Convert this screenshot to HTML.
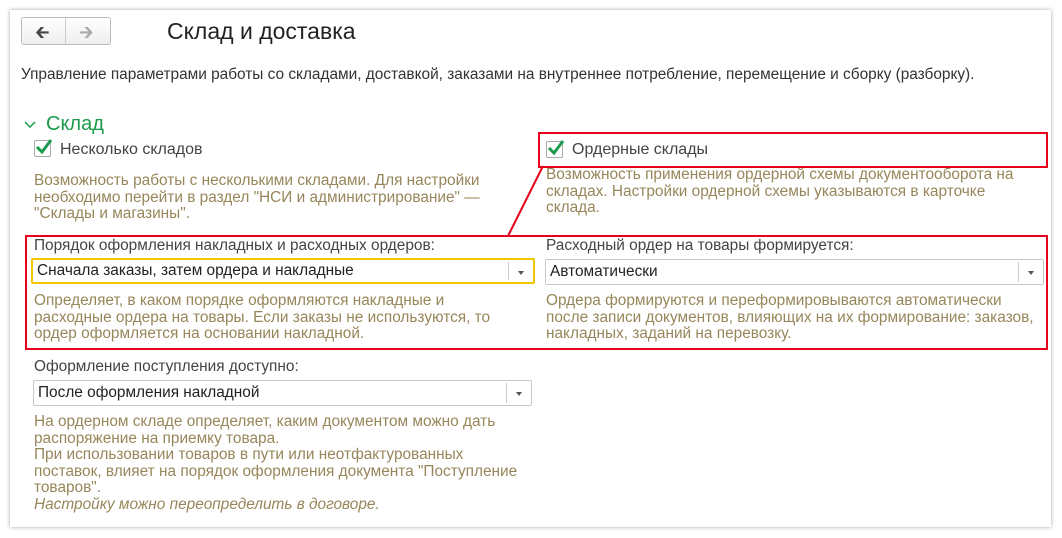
<!DOCTYPE html>
<html><head><meta charset="utf-8"><style>
body{margin:0;width:1062px;height:538px;background:#fff;font-family:"Liberation Sans",sans-serif;position:relative;overflow:hidden;color:#333}
.card{position:absolute;left:10px;top:10px;width:1041px;height:517px;background:#fff;box-shadow:0 0 4px rgba(0,0,0,.35)}
.a{position:absolute;white-space:nowrap}
.h{color:#97865a;font-size:15.4px;line-height:16.6px}
.lbl{font-size:15.4px;color:#444}
.cb{position:absolute;width:15px;height:15px;border:1px solid #aaa;border-radius:2px;background:#fff}
.sel{position:absolute;height:26px;border:1px solid #c8c8c8;border-radius:2px;background:#fff;box-sizing:border-box;font-size:15.4px;line-height:24px;padding-left:4px;color:#222}
.sel .dd{position:absolute;right:0;top:2px;bottom:2px;width:24px;border-left:1px solid #ccc}
.sel .dd:after{content:"";position:absolute;left:9px;top:9px;border:3px solid transparent;border-top:4px solid #555}
.red{position:absolute;border:2px solid #e8001c}
</style></head><body>
<div class="card"></div>
<div class="a" style="left:21px;top:17px;width:90px;height:28px;border:1px solid #bbb;border-radius:3px;background:linear-gradient(#fff,#eee);box-sizing:border-box"></div>
<div class="a" style="left:65px;top:18px;width:1px;height:26px;background:#ccc"></div>
<div class="a" style="left:35px;top:20px;font-size:18px;color:#444">&#129136;</div>
<div class="a" style="left:79px;top:20px;font-size:18px;color:#aaa">&#129138;</div>
<div class="a" style="left:167px;top:18px;font-size:23px;color:#222">Склад и доставка</div>
<div class="a" style="left:21px;top:66px;font-size:15.4px;color:#333">Управление параметрами работы со складами, доставкой, заказами на внутреннее потребление, перемещение и сборку (разборку).</div>
<svg class="a" style="left:23px;top:120px" width="14" height="10"><path d="M2 2 L7 7 L12 2" stroke="#1a9a4a" stroke-width="1.5" fill="none"/></svg>
<div class="a" style="left:46px;top:113px;font-size:20px;color:#1a9a4a">Склад</div>
<div class="cb" style="left:34px;top:140px"></div>
<svg class="a" style="left:34px;top:137px" width="20" height="20"><path d="M3 10 L8 15 L17 3" stroke="#1a9a4a" stroke-width="3" fill="none"/></svg>
<div class="a lbl" style="left:60px;top:141px;font-size:16px">Несколько складов</div>
<div class="a h" style="left:34px;top:173px">Возможность работы с несколькими складами. Для настройки<br>необходимо перейти в раздел "НСИ и администрирование" —<br>"Склады и магазины".</div>
<div class="cb" style="left:546px;top:141px"></div>
<svg class="a" style="left:546px;top:138px" width="20" height="20"><path d="M3 10 L8 15 L17 3" stroke="#1a9a4a" stroke-width="3" fill="none"/></svg>
<div class="a lbl" style="left:572px;top:141px;font-size:16px">Ордерные склады</div>
<div class="a h" style="left:546px;top:167px">Возможность применения ордерной схемы документооборота на<br>складах. Настройки ордерной схемы указываются в карточке<br>склада.</div>
<div class="a lbl" style="left:34px;top:237px">Порядок оформления накладных и расходных ордеров:</div>
<div class="sel" style="left:31px;top:258px;width:504px;border:2px solid #f3c400;line-height:22px">Сначала заказы, затем ордера и накладные<div class="dd"></div></div>
<div class="a h" style="left:34px;top:293px">Определяет, в каком порядке оформляются накладные и<br>расходные ордера на товары. Если заказы не используются, то<br>ордер оформляется на основании накладной.</div>
<div class="a lbl" style="left:546px;top:237px">Расходный ордер на товары формируется:</div>
<div class="sel" style="left:545px;top:259px;width:499px">Автоматически<div class="dd"></div></div>
<div class="a h" style="left:546px;top:293px">Ордера формируются и переформировываются автоматически<br>после записи документов, влияющих на их формирование: заказов,<br>накладных, заданий на перевозку.</div>
<div class="a lbl" style="left:34px;top:358px">Оформление поступления доступно:</div>
<div class="sel" style="left:33px;top:380px;width:499px">После оформления накладной<div class="dd"></div></div>
<div class="a h" style="left:34px;top:414px">На ордерном складе определяет, каким документом можно дать<br>распоряжение на приемку товара.<br>При использовании товаров в пути или неотфактурованных<br>поставок, влияет на порядок оформления документа "Поступление<br>товаров".<br><i>Настройку можно переопределить в договоре.</i></div>
<div class="red" style="left:538px;top:132px;width:506px;height:32px"></div>
<div class="red" style="left:25px;top:235px;width:1019px;height:111px"></div>
<svg class="a" style="left:0;top:0" width="1062" height="538"><line x1="508" y1="236" x2="543" y2="166" stroke="#e8001c" stroke-width="2"/></svg>
</body></html>
